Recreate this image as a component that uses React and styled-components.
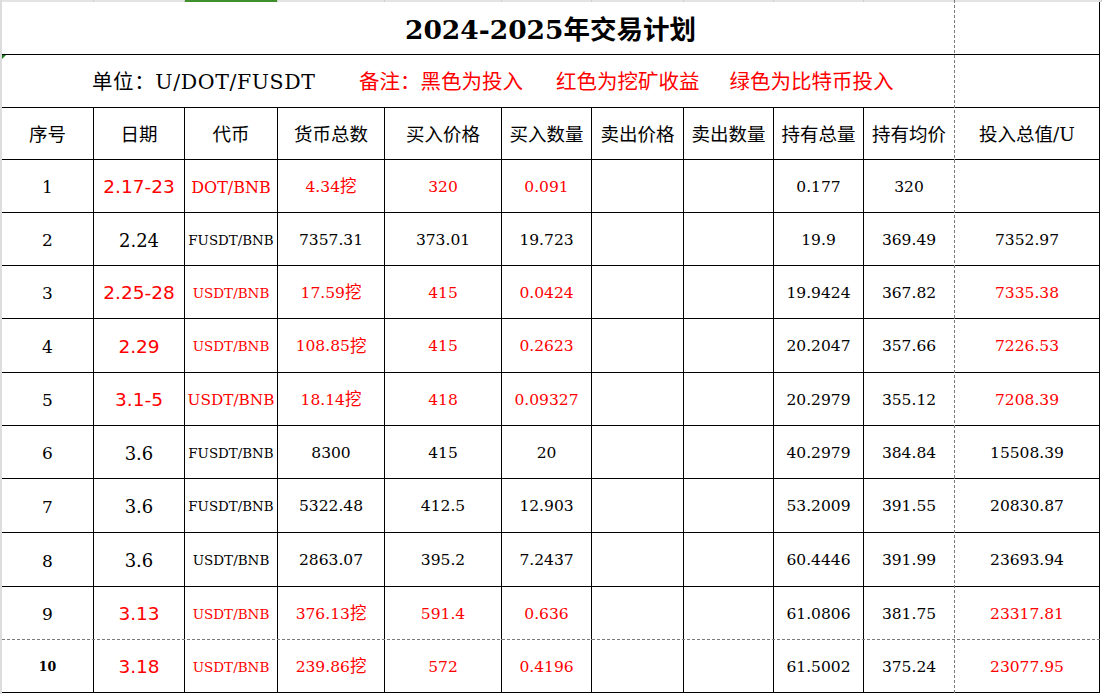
import React from 'react';
import styled, { createGlobalStyle } from 'styled-components';

const SERIF = `"DejaVu Serif", "Noto Sans CJK SC", serif`;
const SANS = `"DejaVu Sans", "Noto Sans CJK SC", sans-serif`;
const COLUMNS = '92px 91px 93px 107px 117px 90px 92px 90px 90px 91px 145px';
const ROWS = '53px 53px 52px 53px 53px 53px 54px 53px 53px 54px 54px 53px 53px';
const RED = '#ff0000';

const GlobalStyle = createGlobalStyle`
  html, body {
    margin: 0;
    padding: 0;
    background: #fff;
  }
`;

const Sheet = styled.div`
  position: relative;
  width: 1102px;
  height: 694px;
  overflow: hidden;
  background: #fff;
  box-sizing: border-box;
  border-left: 2px solid #dcdcdc;
`;

const HeadStrip = styled.div`
  display: grid;
  grid-template-columns: ${COLUMNS} 1fr;
  height: 2px;
  background: #e3e3e3;
`;

const HeadMark = styled.div`
  background: ${(p) => (p.$active ? '#3f8f2c' : 'transparent')};
  border-right: 1px solid #d0d0d0;
`;

const Grid = styled.div`
  display: grid;
  grid-template-columns: ${COLUMNS};
  grid-template-rows: ${ROWS};
`;

const Cell = styled.div`
  display: flex;
  align-items: center;
  justify-content: center;
  box-sizing: border-box;
  padding-top: 3px;
  border-right: 1px solid ${(p) => (p.$breakRight ? 'transparent' : '#000')};
  border-bottom: 1px solid ${(p) => (p.$breakBelow ? 'transparent' : '#000')};
  font-family: ${(p) => (p.$sans ? SANS : SERIF)};
  font-size: ${(p) => p.$size || 15.5}px;
  font-weight: ${(p) => (p.$bold ? 700 : 400)};
  color: ${(p) => (p.$red ? RED : '#000')};
  white-space: nowrap;
  line-height: 1;
`;

const Mine = styled.span`
  font-size: 16.5px;
`;

const HeadCell = styled(Cell)`
  font-size: 18.5px;
  padding-top: 4px;
`;

const TitleCell = styled(Cell)`
  grid-column: 1 / -1;
  font-size: 26.5px;
  font-weight: 700;
  padding-top: 5px;
`;

const UnitCell = styled(Cell)`
  position: relative;
  grid-column: 1 / -1;
  justify-content: flex-start;
  padding-left: 90px;
  font-size: 20.5px;

  &::before {
    content: '';
    position: absolute;
    top: 0;
    left: 0;
    border-top: 4px solid #1d7a1d;
    border-right: 4px solid transparent;
  }
`;

const UnitLabel = styled.span`
  width: 267px;
  letter-spacing: 0.6px;
`;

const Note = styled.span`
  color: ${RED};
  margin-left: ${(p) => p.$gap || 0}px;
`;

const VBreak = styled.div`
  position: absolute;
  top: 0;
  bottom: 0;
  left: 952px;
  width: 1px;
  background: repeating-linear-gradient(to bottom, #7a7a7a 0 3px, transparent 3px 5px);
`;

const HBreak = styled.div`
  position: absolute;
  top: 639px;
  left: 0;
  right: 0;
  height: 1px;
  background: repeating-linear-gradient(to right, #7a7a7a 0 3px, transparent 3px 5px);
`;

const headers = ['序号', '日期', '代币', '货币总数', '买入价格', '买入数量', '卖出价格', '卖出数量', '持有总量', '持有均价', '投入总值/U'];

const rows = [
  { no: '1', date: '2.17-23', pair: 'DOT/BNB', pairSize: 16, total: '4.34', price: '320', qty: '0.091', hold: '0.177', avg: '320', value: '', mined: true },
  { no: '2', date: '2.24', pair: 'FUSDT/BNB', pairSize: 13.4, total: '7357.31', price: '373.01', qty: '19.723', hold: '19.9', avg: '369.49', value: '7352.97' },
  { no: '3', date: '2.25-28', pair: 'USDT/BNB', pairSize: 13.5, total: '17.59', price: '415', qty: '0.0424', hold: '19.9424', avg: '367.82', value: '7335.38', mined: true },
  { no: '4', date: '2.29', pair: 'USDT/BNB', pairSize: 13.5, total: '108.85', price: '415', qty: '0.2623', hold: '20.2047', avg: '357.66', value: '7226.53', mined: true },
  { no: '5', date: '3.1-5', pair: 'USDT/BNB', pairSize: 15.3, total: '18.14', price: '418', qty: '0.09327', hold: '20.2979', avg: '355.12', value: '7208.39', mined: true },
  { no: '6', date: '3.6', pair: 'FUSDT/BNB', pairSize: 13.4, total: '8300', price: '415', qty: '20', hold: '40.2979', avg: '384.84', value: '15508.39' },
  { no: '7', date: '3.6', pair: 'FUSDT/BNB', pairSize: 13.4, total: '5322.48', price: '412.5', qty: '12.903', hold: '53.2009', avg: '391.55', value: '20830.87' },
  { no: '8', date: '3.6', pair: 'USDT/BNB', pairSize: 13.5, total: '2863.07', price: '395.2', qty: '7.2437', hold: '60.4446', avg: '391.99', value: '23693.94' },
  { no: '9', date: '3.13', pair: 'USDT/BNB', pairSize: 13.5, total: '376.13', price: '591.4', qty: '0.636', hold: '61.0806', avg: '381.75', value: '23317.81', mined: true },
  { no: '10', date: '3.18', pair: 'USDT/BNB', pairSize: 13.5, total: '239.86', price: '572', qty: '0.4196', hold: '61.5002', avg: '375.24', value: '23077.95', mined: true },
];

const DataRow = ({ row }) => {
  const red = !!row.mined;
  const below = row.no === '9';
  const small = row.no.length > 1;
  return (
    <>
      <Cell $breakBelow={below} $size={small ? 12.5 : 17} $bold={small}>{row.no}</Cell>
      <Cell $breakBelow={below} $red={red} $sans={red} $size={red ? 18.5 : 18}>{row.date}</Cell>
      <Cell $breakBelow={below} $red={red} $size={row.pairSize}>{row.pair}</Cell>
      <Cell $breakBelow={below} $red={red}>
        {row.total}
        {red && <Mine>挖</Mine>}
      </Cell>
      <Cell $breakBelow={below} $red={red}>{row.price}</Cell>
      <Cell $breakBelow={below} $red={red}>{row.qty}</Cell>
      <Cell $breakBelow={below} />
      <Cell $breakBelow={below} />
      <Cell $breakBelow={below}>{row.hold}</Cell>
      <Cell $breakBelow={below} $breakRight>{row.avg}</Cell>
      <Cell $breakBelow={below} $red={red}>{row.value}</Cell>
    </>
  );
};

const App = () => (
  <>
    <GlobalStyle />
    <Sheet>
      <HeadStrip>
        {headers.map((h, i) => (
          <HeadMark key={h} $active={i === 2} />
        ))}
        <HeadMark />
      </HeadStrip>
      <Grid>
        <TitleCell>2024-2025年交易计划</TitleCell>
        <UnitCell>
          <UnitLabel>单位：U/DOT/FUSDT</UnitLabel>
          <Note>备注：黑色为投入</Note>
          <Note $gap={33}>红色为挖矿收益</Note>
          <Note $gap={30}>绿色为比特币投入</Note>
        </UnitCell>
        {headers.map((h, i) => (
          <HeadCell key={h} $breakRight={i === 9}>{h}</HeadCell>
        ))}
        {rows.map((row) => (
          <DataRow key={row.no} row={row} />
        ))}
      </Grid>
      <VBreak />
      <HBreak />
    </Sheet>
  </>
);

export default App;
